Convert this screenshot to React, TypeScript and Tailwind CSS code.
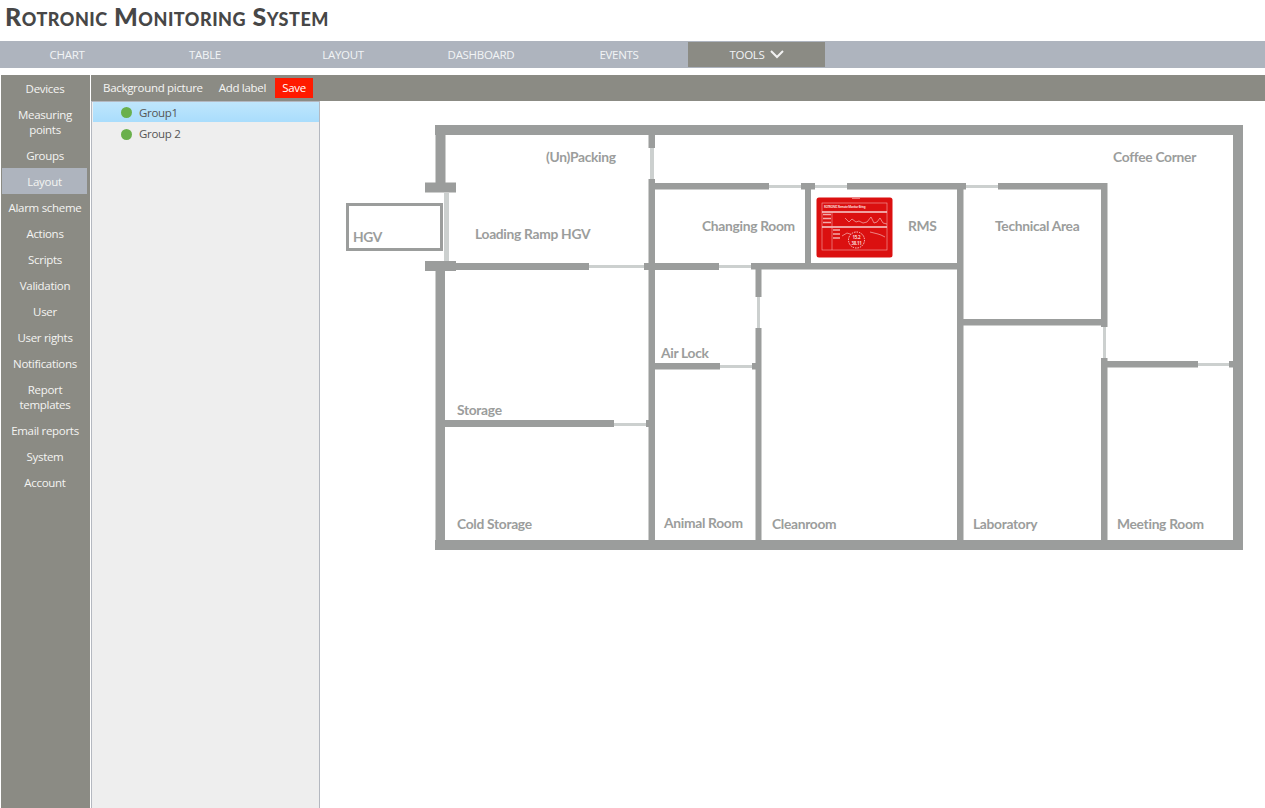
const navItems = ["CHART", "TABLE", "LAYOUT", "DASHBOARD", "EVENTS"];

const sideItems = [
  "Devices",
  "Measuring points",
  "Groups",
  "Layout",
  "Alarm scheme",
  "Actions",
  "Scripts",
  "Validation",
  "User",
  "User rights",
  "Notifications",
  "Report templates",
  "Email reports",
  "System",
  "Account",
];

// x, y, w, h in page coordinates
const walls = [
  [435, 125, 808, 10],
  [435, 540, 808, 10],
  [1233, 125, 10, 425],
  [435.5, 125, 10, 58],
  [425, 182.5, 31, 10],
  [425, 261, 31, 10],
  [435.5, 271, 9.5, 270],
  [456, 263, 133, 7],
  [644, 263, 75, 7],
  [648.5, 179, 6.5, 361],
  [648.5, 135, 6.5, 13],
  [655, 183, 114, 6.5],
  [801, 183, 14, 6.5],
  [805, 189, 6, 74],
  [751, 263, 209, 6.5],
  [755.5, 269, 6, 28],
  [755.5, 328, 6, 212],
  [655, 363, 65, 6.5],
  [752, 363, 4, 6.5],
  [847, 183, 119, 6.5],
  [957, 189, 6.5, 351],
  [998, 183, 109, 6.5],
  [1101, 183, 6.5, 144],
  [963, 319, 138, 6.5],
  [1101, 358, 6.5, 182],
  [1107, 361, 91, 6.5],
  [1229, 361, 4, 6.5],
  [445, 420, 169, 7],
  [646, 420, 3, 7],
];

const doors = [
  [444, 193, 5, 68],
  [650, 148, 4, 31],
  [589, 265, 55, 3],
  [769, 185, 32, 3],
  [815, 185, 32, 3],
  [966, 185, 32, 3],
  [719, 265, 32, 3],
  [757, 297, 3, 31],
  [720, 365, 32, 3],
  [1103, 327, 3, 31],
  [1198, 363, 31, 3],
  [614, 423, 32, 3],
];

const labels: [string, number, number][] = [
  ["(Un)Packing", 546, 162],
  ["Coffee Corner", 1113, 162],
  ["Loading Ramp HGV", 475, 239],
  ["Changing Room", 702, 231],
  ["RMS", 908, 231],
  ["Technical Area", 995, 231],
  ["HGV", 353, 242],
  ["Air Lock", 661, 358],
  ["Storage", 457, 415],
  ["Cold Storage", 457, 529],
  ["Animal Room", 664, 528],
  ["Cleanroom", 772, 529],
  ["Laboratory", 973, 529],
  ["Meeting Room", 1117, 529],
];

function FloorPlan() {
  return (
    <svg viewBox="320 101 945 707" className="block w-[945px] h-[707px]">
      {doors.map(([x, y, w, h], i) => (
        <rect key={i} x={x} y={y} width={w} height={h} fill="#ccd0cf" />
      ))}
      {walls.map(([x, y, w, h], i) => (
        <rect key={i} x={x} y={y} width={w} height={h} fill="#9b9d9c" />
      ))}
      <rect x="347.5" y="204.5" width="94" height="45" fill="none" stroke="#9b9d9c" strokeWidth="3" />

      {labels.map(([text, x, y]) => (
        <text key={text} x={x} y={y} fill="#9b9d9c" fontSize="13.8" fontWeight="700" fontFamily="Lato, sans-serif">
          {text}
        </text>
      ))}

      {/* tablet with the monitoring screen */}
      <rect x="816.5" y="197.5" width="76" height="60" rx="2.5" fill="#db1010" />
      <rect x="852" y="198" width="8" height="1" fill="#ee7a7a" />
      <g fill="none" stroke="#f4a9a9" strokeWidth="0.6">
        <rect x="822" y="203" width="65" height="47" />
        <path d="M822 212H887M822 227H887" strokeWidth="1.4" stroke="#f8d0d0" />
        <path d="M832 212V227M832 227V250" />
        <path d="M823 214.5H831M823 218.5H831M823 222.5H831M833 230H840M833 234H840M833 238H840" strokeWidth="1.6" />
        <path d="M845 218l4 4 3-3 4 3 3-1 4 2 4-1 4-5 3 6 3-1 3-4 3 5 4 1" stroke="#f8d0d0" />
        <path d="M842 236l5-3 3 1 4 1M870 232l4 1 4 1 3 1 4 2" stroke="#f8d0d0" />
        <circle cx="856.5" cy="240" r="8" fill="#db1010" stroke="#f8d0d0" strokeWidth="1" strokeDasharray="1.5 1" />
      </g>
      <text x="856.5" y="239" textAnchor="middle" fontSize="4.5" fontWeight="700" fill="#f8d0d0" fontFamily="'Noto Sans', sans-serif">15.2</text>
      <text x="856.5" y="244.5" textAnchor="middle" fontSize="4.5" fontWeight="700" fill="#f8d0d0" fontFamily="'Noto Sans', sans-serif">38.11</text>
      <text x="824" y="208" fontSize="3" fontWeight="700" fill="#f8d0d0" fontFamily="'Noto Sans', sans-serif">ROTRONIC Remote Monitor Bring</text>
    </svg>
  );
}

export default function App() {
  return (
    <div className="h-screen w-full overflow-hidden bg-white flex flex-col font-['Open_Sans',sans-serif] text-[11.5px] tracking-[-0.3px]">
      {/* HEADER */}
      <header className="h-[41px] pl-[5px] shrink-0">
        <h1 className="font-['Lato',sans-serif] font-black text-[25px] leading-[32px] tracking-[0.5px] text-[#474747] [font-variant-caps:small-caps]">
          Rotronic Monitoring System
        </h1>
      </header>

      {/* TOP NAV */}
      <nav className="h-[27px] bg-[#aeb4be] flex shrink-0 text-[#f2f4f6]">
        <div className="flex -ml-[2px]">
          {navItems.map((item) => (
            <a key={item} className="w-[138px] flex items-center justify-center">
              {item}
            </a>
          ))}
        </div>
        <a className="w-[137px] my-px bg-[#8b8b84] flex items-center justify-center gap-[5px]">
          TOOLS
          <svg width="14" height="9" viewBox="0 0 14 9" fill="none" stroke="#f2f2f2" strokeWidth="2">
            <path d="M1 1l6 6 6-6" />
          </svg>
        </a>
      </nav>

      <div className="flex-1 flex mt-[7px] pl-px min-h-0">
        {/* SIDEBAR */}
        <aside className="w-[89px] bg-[#8b8b84] text-[#f4f4f2] text-center leading-[15px] shrink-0">
          {sideItems.map((item) => (
            <div
              key={item}
              className={
                item === "Layout"
                  ? "w-[85px] ml-px py-[5.5px] px-[6px] bg-[#aeb4be]"
                  : "w-[88px] py-[5.5px] px-[4px]"
              }
            >
              {item === "Measuring points" || item === "Report templates" ? (
                <>
                  {item.split(" ")[0]}
                  <br />
                  {item.split(" ")[1]}
                </>
              ) : (
                item
              )}
            </div>
          ))}
        </aside>

        <div className="flex-1 ml-px flex flex-col min-w-0">
          {/* TOOLBAR */}
          <div className="h-[26px] bg-[#8b8b84] flex items-center pl-[12px] text-[#f6f6f4] shrink-0">
            <span>Background picture</span>
            <span className="ml-[16px]">Add label</span>
            <span className="ml-[9px] w-[38px] h-[20px] bg-[#ff1a00] text-white flex items-center justify-center">Save</span>
          </div>

          <div className="flex-1 flex min-h-0">
            {/* GROUP LIST */}
            <div className="w-[229px] bg-[#eeeeee] border border-b-0 border-[#b4b8c0] shrink-0 text-[#555555]">
              <div className="h-[20px] flex items-center pl-[28px] ml-px pt-px bg-gradient-to-b from-[#bfe6fc] to-[#a9ddfc]">
                <span className="w-[11px] h-[11px] rounded-full bg-[#6ab04c] mr-[7px]" />
                Group1
              </div>
              <div className="h-[24px] flex items-center pl-[28px] ml-px">
                <span className="w-[11px] h-[11px] rounded-full bg-[#6ab04c] mr-[7px]" />
                Group 2
              </div>
            </div>

            {/* PLAN */}
            <main className="flex-1 min-w-0">
              <FloorPlan />
            </main>
          </div>
        </div>
      </div>
    </div>
  );
}
